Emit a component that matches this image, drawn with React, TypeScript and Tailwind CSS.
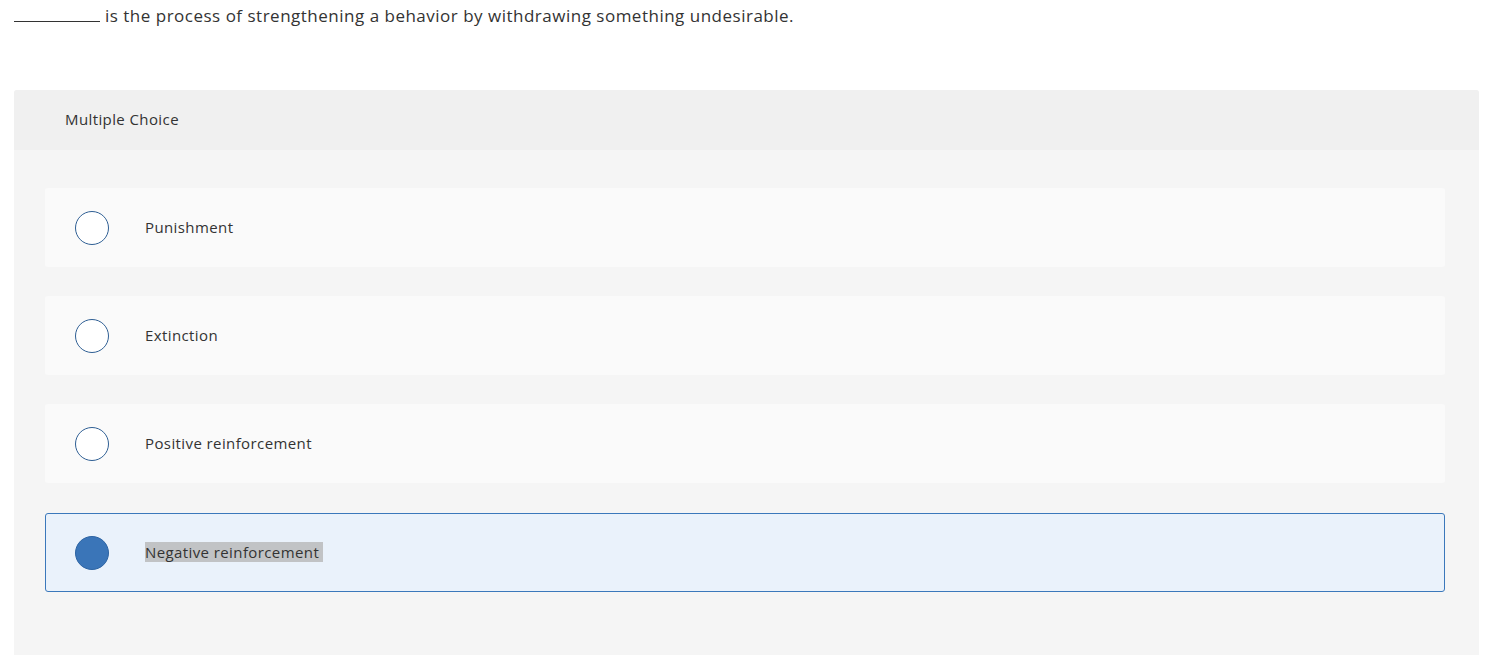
import React from "react";

const options = ["Punishment", "Extinction", "Positive reinforcement", "Negative reinforcement"];

export default function App() {
  return (
    <div className="min-h-[655px] bg-white text-[#333] font-['Open_Sans',sans-serif]">
      <div className="px-[14px] pt-[5px] h-[90px] text-[17px] leading-[22px] tracking-[0.5px] text-[#333]">
        <span className="inline-block w-[86px] border-b border-[#333] align-baseline mr-[5px]"></span>is the process of strengthening a behavior by withdrawing something undesirable.
      </div>
      <div className="mx-[14px] w-[1465px] rounded-t-[3px] bg-[#f5f5f5] min-h-[565px]">
        <div className="h-[60px] bg-[#f0f0f0] rounded-t-[3px] flex items-center pl-[51px] pb-[2px] text-[15px] tracking-[0.4px]">
          Multiple Choice
        </div>
        <div className="pl-[31px] pr-[34px] pt-[38px] flex flex-col gap-[29px]">
          {options.map((o, i) => {
            const sel = i === 3;
            return (
              <div
                key={o}
                className={
                  sel
                    ? "mt-[1px] h-[79px] rounded-[3px] border border-[#3b78bb] bg-[#eaf2fb] flex items-center pl-[29px]"
                    : "h-[79px] rounded-[3px] border border-transparent bg-[#fafafa] flex items-center pl-[29px]"
                }
              >
                <div
                  className={
                    sel
                      ? "w-[34px] h-[34px] rounded-full bg-[#3a75b8] border border-[#2d64a3]"
                      : "w-[34px] h-[34px] rounded-full bg-white border-[1.5px] border-[#2f5f94]"
                  }
                />
                <div className="ml-[36px] pb-[2px] text-[15px] leading-[22px] tracking-[0.4px]">
                  <span className={sel ? "bg-[#c1c3c5] pr-[4px]" : ""}>{o}</span>
                </div>
              </div>
            );
          })}
        </div>
      </div>
    </div>
  );
}
